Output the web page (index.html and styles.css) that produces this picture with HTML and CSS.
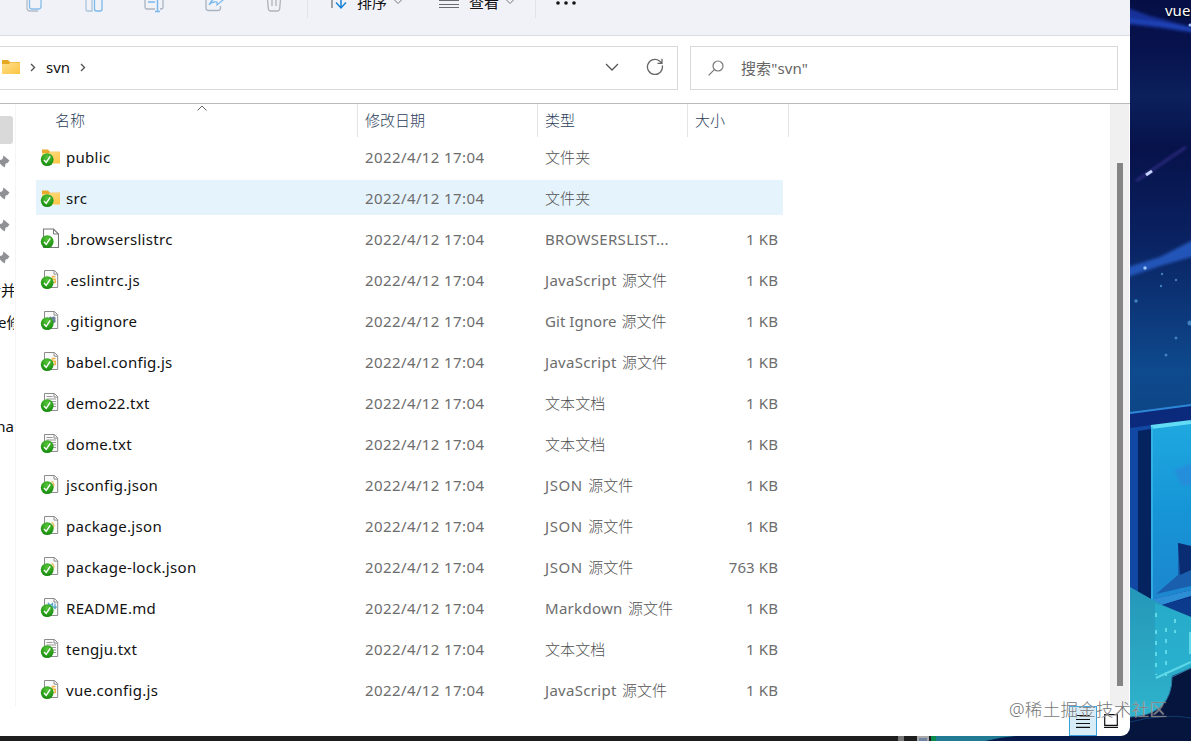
FILE: index.html
```
<!DOCTYPE html>
<html lang="zh-CN">
<head>
    <meta charset="UTF-8">
    <meta name="viewport" content="width=device-width, initial-scale=1.0">
    <title>svn</title>
    <link rel="stylesheet" href="styles.css">
</head>
<body>

    <!-- shared icons -->
    <svg class="sprite" width="0" height="0">
        <defs>
            <linearGradient id="folderFill" x1="0" y1="0" x2="1" y2="1">
                <stop offset="0" stop-color="#ffdf8c"/>
                <stop offset="1" stop-color="#fcc544"/>
            </linearGradient>
            <radialGradient id="badgeFill" cx="0.5" cy="0.3" r="0.7">
                <stop offset="0" stop-color="#58c43a"/>
                <stop offset="1" stop-color="#148a0c"/>
            </radialGradient>
        </defs>
        <symbol id="badge" viewBox="0 0 23 23">
            <circle cx="7.2" cy="13.6" r="6.4" fill="url(#badgeFill)"/>
            <path d="M4 14l2.200 2.300 4-5.900" fill="none" stroke="#fff" stroke-width="1.4"/>
        </symbol>
        <symbol id="folder" viewBox="0 0 23 23">
            <path d="M2 3.5h6l2 2.2h10v3H2z" fill="#e9a92c"/>
            <path d="M2 7h7l1.5-1.3H20v11.8H2z" fill="url(#folderFill)"/>
            <use href="#badge"/>
        </symbol>
        <symbol id="blank" viewBox="0 0 23 23">
            <path d="M3.5 1h10l5 5v13.5h-15z" fill="#fff" stroke="#777" stroke-width="1.1"/>
            <path d="M13.5 1v5h5" fill="none" stroke="#777"/>
            <use href="#badge"/>
        </symbol>
        <symbol id="page" viewBox="0 0 23 23">
            <path d="M4.5 1.5h10l3.2 3.2v13.8H4.5z" fill="#fafafa" stroke="#8c8c8c"/>
            <path d="M14 1.5v3.6h3.7" fill="none" stroke="#8c8c8c"/>
        </symbol>
        <symbol id="js" viewBox="0 0 23 23">
            <use href="#page"/>
            <path d="M15.5 7.5h-3v2.8h2.7v3.2h-3.2" fill="none" stroke="#f0b64c" stroke-width="1.6"/>
            <use href="#badge"/>
        </symbol>
        <symbol id="json" viewBox="0 0 23 23">
            <use href="#page"/>
            <path d="M11.5 7.5c2.5 0 1 3 3 3.2-2 .2-.5 3.2-3 3.2" fill="none" stroke="#ecc064" stroke-width="1.4"/>
            <use href="#badge"/>
        </symbol>
        <symbol id="git" viewBox="0 0 23 23">
            <use href="#page"/>
            <path d="M8.500 8.500l1.500-2 2 .7 2-1 1.800 1.800-.5 1.800.5 2-2 1.500-3 0z" fill="#6a8197"/>
            <use href="#badge"/>
        </symbol>
        <symbol id="md" viewBox="0 0 23 23">
            <use href="#page"/>
            <path d="M8.500 9V6.500l2 2 2-2v4M15 6.500v5m-2-2l2 2 1.500-2" fill="none" stroke="#5ba8cb" stroke-width="1.3"/>
            <use href="#badge"/>
        </symbol>
        <symbol id="txt" viewBox="0 0 23 23">
            <use href="#page"/>
            <path d="M6.500 4.500h6M6.500 7h9.500M6.500 9.500h9.500M10 12h6M11 14.500h5" stroke="#999"/>
            <use href="#badge"/>
        </symbol>
        <symbol id="pin" viewBox="0 0 12 14">
            <path d="M5.500 .5L11.500 5.500 9.500 8 7.600 8.400 6.700 12.500 4.200 10.800 2 8.500H-2V5.500L2.500 5 4.500 4z" fill="#8f9196"/>
        </symbol>
    </svg>

    <div class="desktop">
        <svg class="wallpaper" width="261" height="741" viewBox="930 0 261 741">
            <defs>
                <linearGradient id="sky" x1="0" y1="0" x2="0" y2="1">
                    <stop offset="0" stop-color="#060f45"/>
                    <stop offset="0.07" stop-color="#07134e"/>
                    <stop offset="0.13" stop-color="#0b205c"/>
                    <stop offset="0.2" stop-color="#07124a"/>
                    <stop offset="0.33" stop-color="#0a2363"/>
                    <stop offset="0.5" stop-color="#0e4a8e"/>
                    <stop offset="0.56" stop-color="#0d4686"/>
                </linearGradient>
                <linearGradient id="screen" x1="0" y1="0" x2="0" y2="1">
                    <stop offset="0" stop-color="#1fa8e0"/>
                    <stop offset="0.5" stop-color="#1695d6"/>
                    <stop offset="1" stop-color="#1d86cf"/>
                </linearGradient>
                <linearGradient id="teal" x1="0" y1="0" x2="0" y2="1">
                    <stop offset="0" stop-color="#2597b8"/>
                    <stop offset="1" stop-color="#2fb3cc"/>
                </linearGradient>
                <filter id="soft"><feGaussianBlur stdDeviation="1.8"/></filter>
            </defs>
            <rect x="930" width="261" height="741" fill="url(#sky)"/>
            <g filter="url(#soft)">
                <path d="M1125 7L1150 16 1195 28V33L1160 28 1125 24z" fill="#15319a"/>
                <path d="M1125 20L1160 24 1195 30" stroke="#2446bc" stroke-width="3" fill="none"/>
                <path d="M1136 181L1186 147" stroke="#3a3290" stroke-width="2"/>
                <path d="M1125 268L1160 257 1195 239V256L1160 266 1125 278z" fill="#2355b8"/>
            </g>
            <path d="M1146 175l6-4" stroke="#c4d4ff" stroke-width="3"/>
            <g fill="#4180bc">
                <circle cx="1145" cy="268" r="1.700" fill="#9cc6ff"/>
                <circle cx="1162" cy="274" r="1.200"/>
                <circle cx="1176" cy="280" r="1.200"/>
                <circle cx="1161" cy="286" r="1.200"/>
                <circle cx="1136" cy="301" r="1.800"/>
                <circle cx="1190" cy="323" r="2.500"/>
                <circle cx="1176" cy="338" r="1.500"/>
                <circle cx="1166" cy="355" r="1.500"/>
                <circle cx="1190" cy="25" r="1.500" fill="#a8c4ff"/>
            </g>
            <!-- monitor -->
            <path d="M1130 413L1191 405V741H1130z" fill="#0b2a7c"/>
            <path d="M1130 413L1191 405" stroke="#2e86d6" stroke-width="2"/>
            <path d="M1130 428L1152 425V610L1130 590z" fill="#1148a4"/>
            <path d="M1138 431L1151 429V606L1138 600z" fill="#04235f"/>
            <path d="M1151 427L1191 422V590L1151 600z" fill="url(#screen)"/>
            <path d="M1151 427L1191 422" stroke="#62dcf5" stroke-width="4"/>
            <path d="M1152 427V600" stroke="#38b9e8" stroke-width="1.500"/>
            <g filter="url(#soft)">
                <path d="M1174 470L1195 462V484L1182 486z" fill="#2788dc" opacity="0.7"/>
            </g>
            <path d="M1178 543L1191 546V586L1156 594 1178 575z" fill="#1a5fae"/>
            <path d="M1178 543L1191 546V570L1180 575z" fill="#0a2c72"/>
            <path d="M1150 600L1191 590V596L1155 607z" fill="#2d8ed6"/>
            <path d="M1155 607L1191 597V620z" fill="#0c3a8c"/>
            <!-- table -->
            <path d="M935 735H1191V741H935z" fill="#217b95"/>
            <path d="M985 741Q1010 735 1040 735H1191V741z" fill="#061a4c"/>
            <path d="M1172 677L1191 668V741H1120V712z" fill="#05153e"/>
            <path d="M1130 587L1160 604 1191 617V668L1172 676Q1172 715 1130 717z" fill="url(#teal)"/>
            <path d="M1155 603L1191 617V666L1155 678z" fill="#28b6d4" opacity="0.6"/>
            <path d="M1156 678L1191 662M1190 632v22" stroke="#5fd8e8" stroke-width="2"/>
            <path d="M1156 613v9M1156 630v45M1166 628v50M1175 619v14" stroke="#5fd8e8" stroke-width="2" stroke-dasharray="4 7"/>
            <path d="M1191 668L1172 677Q1172 715 1130 717" fill="none" stroke="#2d79a0"/>
            <path d="M1130 722Q1165 713 1191 718" fill="none" stroke="#123a6c"/>
        </svg>
        <div class="desktop-label">vue</div>
        <div class="taskbar">
            <span class="task-gray"></span>
            <span class="task-blue"></span>
            <span class="task-green"></span>
        </div>

        <div class="window">
            <div class="toolbar">
                <div class="tools">
                    <svg width="20" height="20" fill="none"><path d="M3 0v15q0 3 3 3h8" stroke="#b4bcc6" stroke-width="1.3"/><path d="M5.500 0v13.500q0 2.500 2.500 2.500h6.500q2.500 0 2.500-2.500V0" stroke="#85bdea" stroke-width="1.3"/></svg>
                    <svg width="20" height="20" fill="none"><path d="M2 0v16q0 2 2 2h4V0" stroke="#a9c3da" stroke-width="1.3"/><path d="M10.500 0v16q0 2 2 2H16q2 0 2-2V0" stroke="#7ab8ec" stroke-width="1.3"/></svg>
                    <svg width="20" height="20" fill="none"><path d="M11 16H3q-2 0-2-2V0M16 16h1q2 0 2-2V0" stroke="#a9b3bf" stroke-width="1.3"/><path d="M13.500 0v18M11 18.500h5M4 9h7" stroke="#7ab8ec" stroke-width="1.5"/></svg>
                    <svg width="20" height="20" fill="none"><path d="M2 0v15q0 2.500 2.500 2.500H14q2.500 0 2.500-2.500v-2" stroke="#a9b3bf" stroke-width="1.3"/><path d="M5 12Q8 5 13 6V2l6 5-6 5V9Q8 8 5 12z" stroke="#7ab8ec" stroke-width="1.2"/></svg>
                    <svg width="20" height="20" fill="none" stroke="#b0b2b8" stroke-width="1.3"><path d="M3 0l1.300 15.500q.2 2.500 2.500 2.500h6.400q2.300 0 2.500-2.500L17 0M8 4v9M12 4v9"/></svg>
                </div>
                <div class="divider"></div>
                <div class="tool sort">
                    <svg width="20" height="20" fill="none"><path d="M5 16V1M1 6l4-4" stroke="#777" stroke-width="1.3"/><path d="M14 0v16M9 10.500l5 5.500 5-5.500" stroke="#1683d8" stroke-width="1.5"/></svg>
                    <span>排序</span>
                    <svg width="8" height="6" fill="none" stroke="#777"><path d="M.5 1L4 4.500 7.500 1"/></svg>
                </div>
                <div class="tool view">
                    <svg width="20" height="20" fill="none" stroke="#6b6b6f"><path d="M0 4.500h20M0 8.500h20M0 12.500h20M0 15.500h20"/></svg>
                    <span>查看</span>
                    <svg width="8" height="6" fill="none" stroke="#777"><path d="M.5 1L4 4.500 7.500 1"/></svg>
                </div>
                <div class="divider"></div>
                <svg class="more" width="20" height="4"><circle cx="2" cy="2" r="1.800"/><circle cx="10" cy="2" r="1.800"/><circle cx="18" cy="2" r="1.800"/></svg>
            </div>

            <div class="address-row">
                <div class="address">
                    <svg width="18" height="15"><path d="M0 0h6l2 2h10v4H0z" fill="#e5a823"/><path d="M0 4h7l1.500-1.500H18V14H0z" fill="url(#folderFill)"/></svg>
                    <svg class="crumb" width="6" height="9" fill="none" stroke="#555" stroke-width="1.4"><path d="M1 1l3.500 3.500L1 8"/></svg>
                    <span class="path">svn</span>
                    <svg class="crumb" width="6" height="9" fill="none" stroke="#555" stroke-width="1.4"><path d="M1 1l3.500 3.500L1 8"/></svg>
                    <svg class="drop" width="14" height="8" fill="none" stroke="#555" stroke-width="1.3"><path d="M1 1l6 6 6-6"/></svg>
                    <svg class="refresh" width="18" height="18" fill="none" stroke="#666" stroke-width="1.3"><path d="M16.300 7.500A7.500 7.500 0 1 1 13.500 3L16 5.200M16 .8v4.500h-4.500"/></svg>
                </div>
                <div class="search">
                    <svg width="16" height="16" fill="none" stroke="#777" stroke-width="1.2"><circle cx="10" cy="6" r="5"/><path d="M6.300 9.700L.7 15.300"/></svg>
                    <span>搜索"svn"</span>
                </div>
            </div>

            <div class="content">
                <div class="nav">
                    <div class="nav-selected"></div>
                    <svg class="pin" width="12" height="14"><use href="#pin"/></svg>
                    <svg class="pin" width="12" height="14"><use href="#pin"/></svg>
                    <svg class="pin" width="12" height="14"><use href="#pin"/></svg>
                    <svg class="pin" width="12" height="14"><use href="#pin"/></svg>
                    <div class="nav-text first"><span>合并</span></div>
                    <div class="nav-text cut"><span>e修</span></div>
                    <div class="nav-text last"><span>na</span></div>
                </div>

                <div class="files">
                    <div class="head">
                        <div class="name">名称<svg class="up" width="10" height="6" fill="none" stroke="#666"><path d="M.5 5.500L5 1l4.500 4.500"/></svg></div>
                        <div class="date">修改日期</div>
                        <div class="type">类型</div>
                        <div class="size">大小</div>
                    </div>
                    <div class="rows">
                        <div class="row">
                            <svg class="icon"><use href="#folder"/></svg><span class="name">public</span><span class="date">2022/4/12 17:04</span><span class="type zh">文件夹</span><span class="size"></span>
                        </div>
                        <div class="row active">
                            <svg class="icon"><use href="#folder"/></svg><span class="name">src</span><span class="date">2022/4/12 17:04</span><span class="type zh">文件夹</span><span class="size"></span>
                        </div>
                        <div class="row">
                            <svg class="icon"><use href="#blank"/></svg><span class="name">.browserslistrc</span><span class="date">2022/4/12 17:04</span><span class="type">BROWSERSLIST...</span><span class="size">1 KB</span>
                        </div>
                        <div class="row">
                            <svg class="icon"><use href="#js"/></svg><span class="name">.eslintrc.js</span><span class="date">2022/4/12 17:04</span><span class="type">JavaScript <b>源文件</b></span><span class="size">1 KB</span>
                        </div>
                        <div class="row">
                            <svg class="icon"><use href="#git"/></svg><span class="name">.gitignore</span><span class="date">2022/4/12 17:04</span><span class="type git">Git Ignore <b>源文件</b></span><span class="size">1 KB</span>
                        </div>
                        <div class="row">
                            <svg class="icon"><use href="#js"/></svg><span class="name">babel.config.js</span><span class="date">2022/4/12 17:04</span><span class="type">JavaScript <b>源文件</b></span><span class="size">1 KB</span>
                        </div>
                        <div class="row">
                            <svg class="icon"><use href="#txt"/></svg><span class="name">demo22.txt</span><span class="date">2022/4/12 17:04</span><span class="type zh">文本文档</span><span class="size">1 KB</span>
                        </div>
                        <div class="row">
                            <svg class="icon"><use href="#txt"/></svg><span class="name">dome.txt</span><span class="date">2022/4/12 17:04</span><span class="type zh">文本文档</span><span class="size">1 KB</span>
                        </div>
                        <div class="row">
                            <svg class="icon"><use href="#json"/></svg><span class="name">jsconfig.json</span><span class="date">2022/4/12 17:04</span><span class="type json">JSON <b>源文件</b></span><span class="size">1 KB</span>
                        </div>
                        <div class="row">
                            <svg class="icon"><use href="#json"/></svg><span class="name">package.json</span><span class="date">2022/4/12 17:04</span><span class="type json">JSON <b>源文件</b></span><span class="size">1 KB</span>
                        </div>
                        <div class="row">
                            <svg class="icon"><use href="#json"/></svg><span class="name">package-lock.json</span><span class="date">2022/4/12 17:04</span><span class="type json">JSON <b>源文件</b></span><span class="size">763 KB</span>
                        </div>
                        <div class="row">
                            <svg class="icon"><use href="#md"/></svg><span class="name">README.md</span><span class="date">2022/4/12 17:04</span><span class="type">Markdown <b>源文件</b></span><span class="size">1 KB</span>
                        </div>
                        <div class="row">
                            <svg class="icon"><use href="#txt"/></svg><span class="name">tengju.txt</span><span class="date">2022/4/12 17:04</span><span class="type zh">文本文档</span><span class="size">1 KB</span>
                        </div>
                        <div class="row">
                            <svg class="icon"><use href="#js"/></svg><span class="name">vue.config.js</span><span class="date">2022/4/12 17:04</span><span class="type">JavaScript <b>源文件</b></span><span class="size">1 KB</span>
                        </div>
                    </div>
                </div>

                <div class="scrollbar"><div class="thumb"></div></div>
            </div>

            <div class="statusbar">
                <div class="view-btn selected">
                    <svg width="14" height="14" stroke="#111" stroke-width="1.2"><path d="M0 1.500h14M0 5.500h14M0 9.500h14M0 13.400h14"/></svg>
                </div>
                <div class="view-btn">
                    <svg width="14" height="14" fill="none" stroke="#111" stroke-width="1.2"><path d="M.7.700h12.600v10.600H.7zM0 13.400h14"/></svg>
                </div>
            </div>
        </div>

        <div class="watermark">@稀土掘金技术社区</div>
    </div>

</body>
</html>
```
FILE: styles.css
```
* {
    box-sizing: border-box;
}
body {
    margin: 0;
    font-family: "Noto Sans", "Noto Sans CJK SC", sans-serif;
    font-size: 15px;
    color: #111;
    overflow: hidden;
}
svg {
    display: block;
    flex-shrink: 0;
}
.sprite {
    position: absolute;
}
.desktop {
    position: relative;
    width: 1191px;
    height: 741px;
    overflow: hidden;
    background: #1e1e1e;
}
.wallpaper {
    position: absolute;
    right: 0;
    top: 0;
}
.desktop-label {
    position: absolute;
    left: 1165px;
    top: 0;
    color: #fff;
    line-height: 20px;
    text-shadow: 0 1px 2px #000;
}
.taskbar {
    position: absolute;
    left: 0;
    bottom: 0;
    width: 936px;
    height: 5px;
    display: flex;
    padding-left: 898px;
    background: #1e1e1e;
}
.task-gray {
    width: 6px;
    background: #777;
}
.task-blue {
    width: 12px;
    margin-left: 13px;
    background: #7184a4;
    border: 2px solid #aaa;
    border-bottom: none;
}
.task-green {
    width: 5px;
    margin-left: 2px;
    background: #0c8c4c;
}

/* explorer window */
.window {
    position: relative;
    display: flex;
    flex-direction: column;
    width: 1130px;
    height: 736px;
    background: #fff;
    border-radius: 0 0 9px 0;
    overflow: hidden;
}
.toolbar {
    display: flex;
    align-items: flex-start;
    height: 36px;
    flex-shrink: 0;
    background: #f0f2f8;
    border-bottom: 1px solid #dcdde3;
}
.tools {
    display: flex;
    gap: 40px;
    margin-top: -7px;
    padding-left: 24px;
}
.divider {
    width: 1px;
    height: 18px;
    margin-left: 23px;
    background: #e1e3e9;
}
.tool {
    display: flex;
    align-items: center;
    height: 24px;
    margin-top: -10px;
    line-height: 24px;
}
.sort {
    margin-left: 19px;
}
.view {
    margin-left: 37px;
}
.view + .divider {
    margin-left: 21px;
}
.tool span {
    margin: 0 7px 0 10px;
}
.more {
    margin: 1px 0 0 20px;
    fill: #111;
}
.address-row {
    display: flex;
    height: 68px;
    flex-shrink: 0;
    padding: 10px 12px 13px 0;
    gap: 12px;
    border-bottom: 1px solid #b9b9b9;
}
.address {
    display: flex;
    align-items: center;
    width: 678px;
    border: 1px solid #d9d9d9;
    border-left: none;
    padding: 0 13px 2px 2px;
}
.crumb {
    margin-left: 10px;
}
.path {
    margin-left: 10px;
}
.drop {
    margin-left: auto;
}
.refresh {
    margin-left: 27px;
}
.search {
    display: flex;
    align-items: center;
    flex: 1;
    border: 1px solid #d9d9d9;
    padding: 0 0 1px 17px;
    color: #666;
}
.search span {
    margin-left: 17px;
    letter-spacing: 0.1px;
}

.content {
    display: flex;
    height: 602px;
    flex-shrink: 0;
}
.nav {
    width: 16px;
    padding-top: 12px;
    border-right: 1px solid #f5f5f5;
}
.nav-selected {
    width: 13px;
    height: 28px;
    margin-bottom: 11px;
    background: #d9d9d9;
    border-radius: 0 3px 3px 0;
}
.pin {
    margin-bottom: 18px;
    margin-left: -2px;
}
.nav-text {
    display: flex;
    justify-content: flex-end;
    width: 14px;
    height: 32px;
    line-height: 32px;
    overflow: hidden;
    white-space: nowrap;
    margin-top: -9px;
}
.nav-text.first span {
    margin-right: -2px;
}
.nav-text.cut {
    margin-top: 0;
    justify-content: flex-start;
}
.nav-text.cut span {
    margin-left: -2px;
}
.nav-text.last {
    margin-top: 72px;
}
.files {
    width: 773px;
    flex-shrink: 0;
    padding-left: 20px;
}
.head {
    display: flex;
    height: 33px;
    line-height: 32px;
    color: #2c3e5a;
    font-weight: 300;
}
.head > div {
    flex-shrink: 0;
    border-right: 1px solid #e5e5e5;
    padding-left: 7px;
}
.head .name {
    position: relative;
    width: 322px;
    padding-left: 19px;
}
.up {
    position: absolute;
    left: 161px;
    top: 1px;
}
.head .date {
    width: 180px;
}
.head .type {
    width: 150px;
}
.head .size {
    width: 101px;
}
.rows {
    display: flex;
    flex-direction: column;
    gap: 6px;
    padding-top: 2px;
}
.row {
    display: flex;
    align-items: center;
    width: 747px;
    height: 35px;
    padding: 0 5px 0 4px;
    color: #6d6d6d;
    white-space: nowrap;
}
.row.active {
    background: #e5f3fd;
}
.icon {
    width: 23px;
    height: 23px;
    margin-top: 2px;
}
.row .name {
    width: 302px;
    padding-left: 3px;
    color: #111;
    letter-spacing: 0.3px;
}
.row .date {
    width: 180px;
    letter-spacing: 0.4px;
}
.row .type {
    width: 140px;
    letter-spacing: 0.3px;
}
.row .type.zh {
    color: #505050;
    font-weight: 300;
    letter-spacing: 0.1px;
}
.row .type.git {
    letter-spacing: 0.05px;
}
.row .type.json {
    letter-spacing: 0.6px;
}
.row b {
    color: #505050;
    font-weight: 300;
    letter-spacing: 0;
    margin-left: 1px;
}
.row .size {
    flex: 1;
    text-align: right;
    letter-spacing: 0.1px;
}
.scrollbar {
    width: 19px;
    margin-left: auto;
    margin-right: 1px;
    padding: 59px 0 0 7px;
    background: #f0f0f0;
}
.thumb {
    width: 6px;
    height: 523px;
    background: #858585;
}
.statusbar {
    display: flex;
    justify-content: flex-end;
    align-items: flex-start;
    height: 30px;
    padding-right: 5px;
}
.view-btn {
    display: flex;
    align-items: center;
    justify-content: center;
    width: 28px;
    height: 30px;
}
.view-btn.selected {
    background: #d8ecf8;
    border: 1px solid #3b9fdc;
}
.watermark {
    position: absolute;
    left: 1009px;
    top: 697px;
    font-size: 17.5px;
    font-weight: 300;
    letter-spacing: 0.3px;
    line-height: 24px;
    color: #777;
    text-shadow: 0 0 1px rgba(255, 255, 255, 0.9);
    white-space: nowrap;
}
```
